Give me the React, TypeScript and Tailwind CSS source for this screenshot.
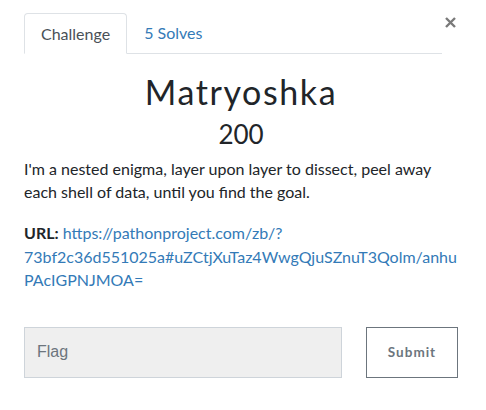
import React from "react";

export default function App() {
  return (
    <div className="w-[486px] h-[410px] bg-white text-[#212529] font-['Lato','Noto_Sans',sans-serif] overflow-hidden">
      <div className="flex items-start pt-[13px] pl-6 pr-[30px]">
        <div className="flex flex-1 border-b border-[#dee2e6] h-[41px]">
          <div className="h-[41px] px-4 flex items-center border border-[#dee2e6] border-b-white rounded-t-[4px] bg-white text-[#495057] text-[16px] -mb-px">
            Challenge
          </div>
          <div className="h-[40px] px-[17px] flex items-center text-[#337ab7] text-[16px]">
            5 Solves
          </div>
        </div>
        <button className="w-[12px] ml-[2px] mt-[4px] flex justify-end" aria-label="Close">
          <svg width="11" height="11" viewBox="0 0 11 11">
            <path d="M1 1 L10 10 M10 1 L1 10" stroke="#7a7a7a" strokeWidth="2.4" strokeLinecap="butt" />
          </svg>
        </button>
      </div>
      <div className="pl-6 pr-[28px]">
        <h2 className="text-center text-[34px] leading-[40px] tracking-[1.6px] mt-[18px] font-normal">Matryoshka</h2>
        <h3 className="text-center text-[26px] leading-[32px] mt-[6px] font-normal">200</h3>
        <p className="text-[16px] leading-[22.7px] mt-[8px]">
          I'm a nested enigma, layer upon layer to dissect, peel away each shell of data, until you find the goal.
        </p>
        <p className="text-[16px] leading-[23.5px] mt-[18px] break-words">
          <span className="font-bold">URL:</span>{" "}
          <a className="text-[#337ab7]" href="#">
            https://pathonproject.com/zb/?<wbr />73bf2c36d551025a#uZCtjXuTaz4WwgQjuSZnuT3Qolm/anhuPAcIGPNJMOA=
          </a>
        </p>
        <div className="flex mt-[35px]">
          <div className="w-[318px] h-[51px] bg-[#efefef] border border-[#ced4da] flex items-center pl-[12px] text-[16px] text-[#6c757d] font-['Liberation_Sans',Arial,sans-serif]">
            Flag
          </div>
          <div className="ml-[24px] w-[92px] h-[51px] border border-[#6c757d] flex items-center justify-center text-[13.5px] font-bold tracking-[1px] text-[#6c757d]">
            Submit
          </div>
        </div>
      </div>
    </div>
  );
}
